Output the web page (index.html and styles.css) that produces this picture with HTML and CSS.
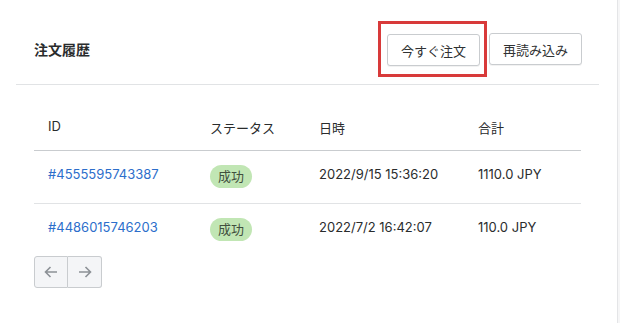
FILE: index.html
```html
<!DOCTYPE html>
<html lang="ja">
<head>
    <meta charset="UTF-8">
    <meta name="viewport" content="width=device-width, initial-scale=1.0">
    <title>注文履歴</title>
    <link rel="stylesheet" href="styles.css">
</head>
<body>
    <div class="page">
        <div class="card">
            <div class="card-header">
                <h2>注文履歴</h2>
                <div class="actions">
                    <div class="highlight">
                        <button class="btn">今すぐ注文</button>
                    </div>
                    <button class="btn">再読み込み</button>
                </div>
            </div>
            <div class="card-body">
                <table class="orders">
                    <thead>
                        <tr>
                            <th class="col-id">ID</th>
                            <th class="col-status">ステータス</th>
                            <th class="col-date">日時</th>
                            <th class="col-total">合計</th>
                        </tr>
                    </thead>
                    <tbody>
                        <tr>
                            <td><a href="#">#4555595743387</a></td>
                            <td class="status"><span class="badge">成功</span></td>
                            <td>2022/9/15 15:36:20</td>
                            <td>1110.0 JPY</td>
                        </tr>
                        <tr>
                            <td><a href="#">#4486015746203</a></td>
                            <td class="status"><span class="badge">成功</span></td>
                            <td>2022/7/2 16:42:07</td>
                            <td>110.0 JPY</td>
                        </tr>
                    </tbody>
                </table>
                <div class="pager">
                    <button class="pager-btn" aria-label="前へ">
                        <svg width="16" height="16" viewBox="0 0 16 16"><path d="M14 8H2.5M7.5 3 2.5 8l5 5" fill="none" stroke="#8c9196" stroke-width="1.6"/></svg>
                    </button>
                    <button class="pager-btn" aria-label="次へ">
                        <svg width="16" height="16" viewBox="0 0 16 16"><path d="M2 8h11.5M8.5 3l5 5-5 5" fill="none" stroke="#8c9196" stroke-width="1.6"/></svg>
                    </button>
                </div>
            </div>
        </div>
    </div>
</body>
</html>
```

FILE: styles.css
```css
body {
    margin: 0;
    font-family: Inter, "Noto Sans CJK JP", sans-serif;
    font-size: 13px;
    color: #2a2c2d;
    background-color: #f6f6f7;
}
.page {
    width: 618px;
    height: 323px;
    background-color: white;
    border-right: 1px solid #e4e5e7;
    padding: 0 18px 0 16px;
    box-sizing: border-box;
}
.card-header {
    display: flex;
    justify-content: space-between;
    align-items: center;
    height: 85px;
    padding: 0 17px 0 18px;
    border-bottom: 1px solid #e1e3e5;
    box-sizing: border-box;
}
.card-header h2 {
    margin: 0;
    font-size: 14px;
    font-weight: 700;
    padding-top: 14px;
}
.actions {
    display: flex;
    align-items: center;
    gap: 2px;
    padding-top: 14px;
}
.highlight {
    border: 3px solid #d83a3a;
    padding: 10px 4px 8px 6px;
}
.btn {
    font-family: inherit;
    font-size: 13px;
    color: #303233;
    background-color: #fff;
    border: 1px solid #c9cccf;
    border-radius: 3px;
    height: 32px;
    padding: 0 13px;
    box-shadow: 0 1px 0 rgba(0, 0, 0, 0.05);
}
.card-body {
    padding: 0 18px;
}
.orders {
    width: 100%;
    border-collapse: collapse;
    margin-top: 30px;
}
.orders th {
    text-align: left;
    font-weight: 400;
    height: 35px;
    box-sizing: border-box;
    vertical-align: top;
    padding: 3px 0 0 14px;
    border-bottom: 1px solid #c9cccf;
}
.orders td {
    height: 53px;
    box-sizing: border-box;
    padding: 0 0 6px 14px;
    vertical-align: middle;
}
.orders td.status {
    padding-bottom: 0;
}
.orders tbody tr:first-child td {
    border-bottom: 1px solid #e1e3e5;
}
.col-id { width: 162px; }
.col-status { width: 109px; }
.col-date { width: 159px; }
.orders a {
    color: #2c6ecb;
    text-decoration: none;
}
.badge {
    display: inline-block;
    background-color: #c1e6b4;
    color: #414f3e;
    border-radius: 12px;
    padding: 0 8px;
    line-height: 23px;
}
.pager {
    display: flex;
}
.pager-btn {
    width: 34px;
    height: 32px;
    background-color: #f4f5f7;
    border: 1px solid #c9cccf;
    display: flex;
    align-items: center;
    justify-content: center;
    padding: 0;
}
.pager-btn:first-child {
    border-radius: 3px 0 0 3px;
}
.pager-btn:last-child {
    border-radius: 0 3px 3px 0;
    border-left: none;
}
```
